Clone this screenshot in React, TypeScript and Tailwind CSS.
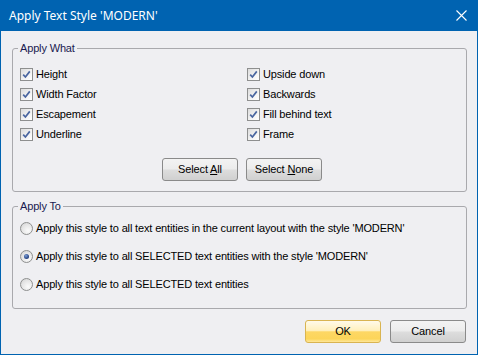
import React from "react";

const FONT = { fontFamily: '"Liberation Sans", Arial, sans-serif' };

function CheckBox() {
  return (
    <span className="inline-flex h-[13px] w-[13px] shrink-0 items-center justify-center border border-[#8e8f8f] bg-[linear-gradient(135deg,#dcdcdc_0%,#f4f4f4_60%,#ffffff_100%)]">
      <svg width="9" height="9" viewBox="0 0 9 9">
        <path d="M1.2 4.6 L3.4 7 L7.8 1.4" fill="none" stroke="#4a66a0" strokeWidth="1.7" />
      </svg>
    </span>
  );
}

function Radio({ on = false }: { on?: boolean }) {
  return (
    <span className="inline-flex h-[13px] w-[13px] shrink-0 items-center justify-center rounded-full border border-[#8e8f8f] bg-[radial-gradient(circle_at_65%_70%,#fbfbfb_0%,#e6e6e6_55%,#cfcfcf_100%)]">
      {on && <span className="h-[5px] w-[5px] rounded-full bg-[radial-gradient(circle_at_40%_35%,#7ea0d8_0%,#2c4a8a_60%,#1b2f5c_100%)]" />}
    </span>
  );
}

function Btn({ children, ok = false }: { children: React.ReactNode; ok?: boolean }) {
  return (
    <button
      className={`flex h-[23px] w-[76px] items-center justify-center rounded-[3px] border text-[11px] text-black ${
        ok
          ? "border-[#d9b451] bg-[linear-gradient(to_bottom,#fffaea_0%,#fff0bd_45%,#fdd764_52%,#fcd55a_85%,#fee79a_100%)]"
          : "border-[#8a8a8a] bg-[linear-gradient(to_bottom,#f3f3f3_0%,#ececec_48%,#dddddd_52%,#d0d0d0_100%)]"
      }`}
      style={FONT}
    >
      <span>{children}</span>
    </button>
  );
}

export default function App() {
  const left = ["Height", "Width Factor", "Escapement", "Underline"];
  const right = ["Upside down", "Backwards", "Fill behind text", "Frame"];
  const radios = [
    "Apply this style to all text entities in the current layout with the style 'MODERN'",
    "Apply this style to all SELECTED text entities with the style 'MODERN'",
    "Apply this style to all SELECTED text entities",
  ];

  return (
    <div className="flex h-[355px] w-[478px] flex-col bg-[#0063b1] px-[1px] pb-[1px]" style={FONT}>
      {/* Title bar */}
      <div className="flex h-[31px] shrink-0 items-center justify-between pl-[8px] pr-[10px]">
        <span className="text-[12px] text-white" style={{ fontFamily: '"Noto Sans", "Open Sans", sans-serif' }}>
          Apply Text Style 'MODERN'
        </span>
        <svg width="11" height="11" viewBox="0 0 11 11">
          <path d="M0.5 0.5 L10.5 10.5 M10.5 0.5 L0.5 10.5" stroke="#ffffff" strokeWidth="1.1" />
        </svg>
      </div>

      {/* Body */}
      <div className="flex flex-1 flex-col bg-[#efeff2] pl-[11px] pr-[10px] pt-[17px] text-[11px] tracking-[-0.15px] text-black">
        {/* Apply What */}
        <div className="relative h-[144px] rounded-[3px] border border-[#a9a9ad] pl-[7px] pt-[19px]">
          <span className="absolute -top-[8px] left-[5px] bg-[#efeff2] px-[2px] leading-[14px] text-[#1a1a50]">
            Apply What
          </span>
          <div className="grid grid-cols-[227px_1fr]">
            <div className="flex flex-col">
              {left.map((t) => (
                <div key={t} className="flex h-[20px] items-start gap-[3px]">
                  <CheckBox />
                  <span className="leading-[13px]">{t}</span>
                </div>
              ))}
            </div>
            <div className="flex flex-col">
              {right.map((t) => (
                <div key={t} className="flex h-[20px] items-start gap-[3px]">
                  <CheckBox />
                  <span className="leading-[13px]">{t}</span>
                </div>
              ))}
            </div>
          </div>
          <div className="mt-[10px] flex gap-[8px] pl-[142px]">
            <Btn>
              Select <span className="underline">A</span>ll
            </Btn>
            <Btn>
              Select <span className="underline">N</span>one
            </Btn>
          </div>
        </div>

        {/* Apply To */}
        <div className="relative mt-[14px] h-[103px] rounded-[3px] border border-[#a9a9ad] pl-[7px] pt-[15px]">
          <span className="absolute -top-[8px] left-[5px] bg-[#efeff2] px-[2px] leading-[14px] text-[#1a1a50]">
            Apply To
          </span>
          <div className="flex flex-col gap-[15px]">
            {radios.map((t, i) => (
              <div key={t} className="flex h-[13px] items-center gap-[3px]">
                <Radio on={i === 1} />
                <span className="leading-[13px]">{t}</span>
              </div>
            ))}
          </div>
        </div>

        {/* Footer */}
        <div className="mt-[11px] flex justify-end gap-[9px] pr-[1px]">
          <Btn ok>OK</Btn>
          <Btn>Cancel</Btn>
        </div>
      </div>
    </div>
  );
}
